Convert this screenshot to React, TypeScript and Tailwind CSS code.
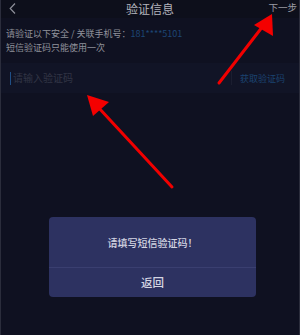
export default function App() {
  return (
    <div
      className="relative w-[300px] h-[335px] overflow-hidden bg-[#0f1121] border-x border-[#2b2d3c]"
      style={{ fontFamily: '"Noto Sans CJK SC", "Noto Sans", sans-serif' }}
    >
      {/* header */}
      <div className="relative flex items-center justify-center h-[18px] bg-[#0d0f1b]">
        <svg className="absolute left-[8px] top-[3px]" width="7" height="11" viewBox="0 0 7 11">
          <path d="M6 0.5 L1.2 5.5 L6 10.5" fill="none" stroke="#8d8f99" strokeWidth="1.2" />
        </svg>
        <span className="text-[12px] leading-[16px] text-[#b3b4bd]">验证信息</span>
        <span className="absolute right-[2px] top-[2px] text-[9.5px] leading-[11px] text-[#9c9da6]">下一步</span>
      </div>

      {/* info */}
      <div className="px-[5px] pt-[9px] text-[9px] leading-[14px] text-[#8f919b]">
        <div>
          请验证以下安全 / 关联手机号：<span className="text-[#1d4675]">181****5101</span>
        </div>
        <div>短信验证码只能使用一次</div>
      </div>

      {/* input row */}
      <div className="mt-[8px] flex items-center h-[30px] bg-[#111426] pl-[9px] pr-[14px]">
        <div className="w-[1px] h-[13px] bg-[#1f4f86]" />
        <span className="ml-[2px] flex-1 text-[10px] leading-none text-[#313445]">请输入验证码</span>
        <div className="w-[1px] h-[14px] bg-[#1b1e30] mr-[8px]" />
        <span className="text-[9px] leading-none text-[#1b4370]">获取验证码</span>
      </div>

      {/* dialog */}
      <div className="absolute left-[48px] top-[217px] w-[207px] h-[80px] rounded-[4px] bg-[#2d3261] flex flex-col">
        <div className="h-[50px] flex items-center justify-center text-[10px] font-medium text-[#d4d5e2]">
          请填写短信验证码！
        </div>
        <div className="h-[1px] bg-[#3a3f70]" />
        <div className="flex-1 flex items-center justify-center text-[11.5px] font-medium text-[#d4d5e2]">返回</div>
      </div>

      {/* annotation arrows */}
      <svg className="absolute inset-0 pointer-events-none" width="300" height="335" viewBox="0 0 300 335">
        <line x1="218" y1="83" x2="262" y2="26" stroke="#f10000" strokeWidth="3" strokeLinecap="round" />
        <polygon points="271,14 272,36 253,25" fill="#f40000" />
        <line x1="171" y1="187" x2="97" y2="107" stroke="#f10000" strokeWidth="3" strokeLinecap="round" />
        <polygon points="86,95 108,102 92,116" fill="#f40000" />
      </svg>
    </div>
  )
}
